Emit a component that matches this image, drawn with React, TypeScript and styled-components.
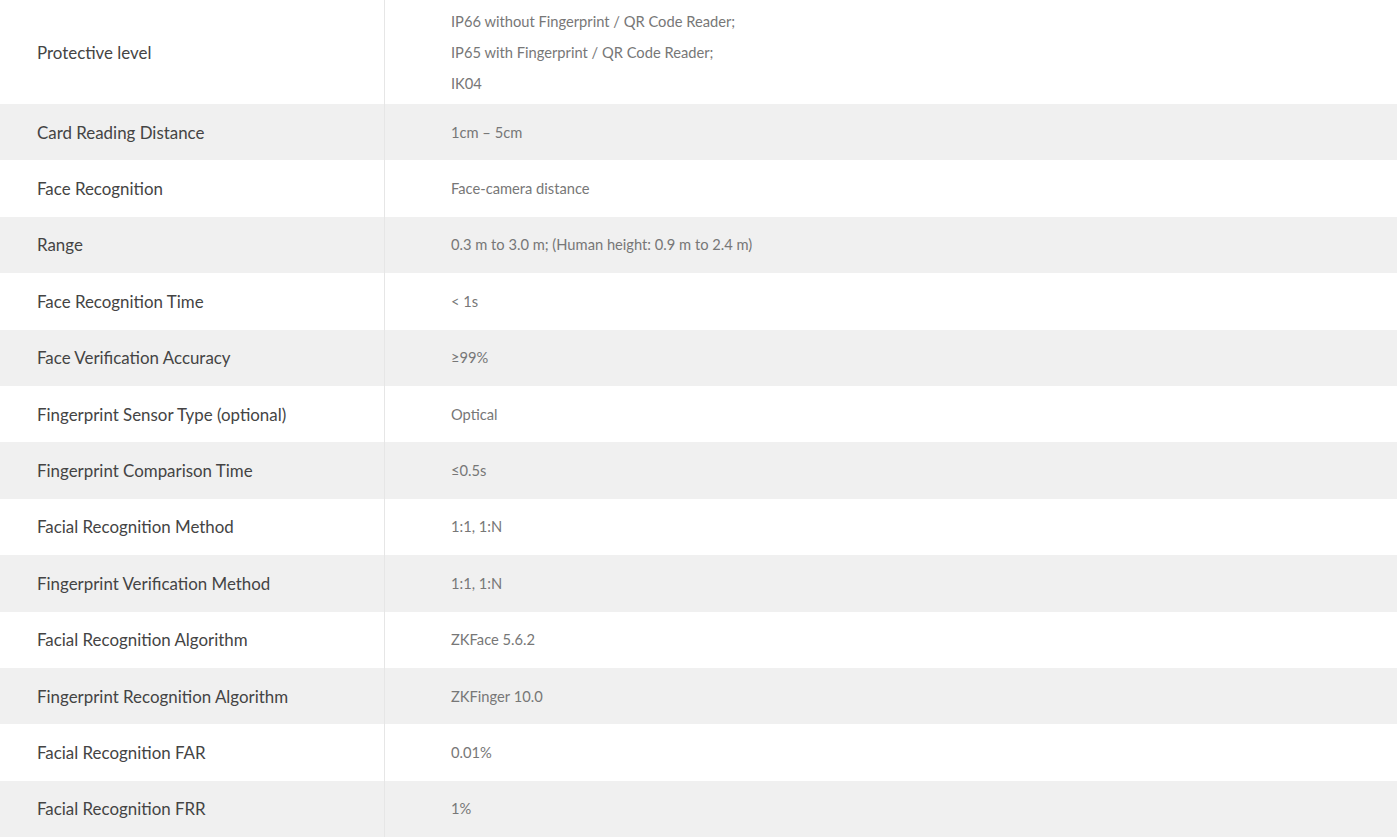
import React from "react";
import styled, { createGlobalStyle } from "styled-components";

const Global = createGlobalStyle`
  html, body { margin: 0; padding: 0; background: #fff; }
  body { font-family: Lato, "Open Sans", sans-serif; }
`;

const Table = styled.div`
  width: 1397px;
  display: flex;
  flex-direction: column;
`;

const Row = styled.div<{ $shaded: boolean; $tall?: boolean }>`
  display: grid;
  grid-template-columns: 385px 1fr;
  height: ${(p) => (p.$tall ? "104px" : "56.4px")};
  background: ${(p) => (p.$shaded ? "#f0f0f0" : "#ffffff")};
`;

const Label = styled.div`
  display: flex;
  align-items: center;
  padding-left: 37px;
  border-right: 1px solid #e6e6e6;
  font-size: 16.9px;
  color: #444;
`;

const Value = styled.div`
  display: flex;
  flex-direction: column;
  justify-content: center;
  padding-left: 66px;
  font-size: 14.7px;
  color: #777;
  line-height: 31px;
`;

const rows: { label: string; value: string[] }[] = [
  {
    label: "Protective level",
    value: [
      "IP66 without Fingerprint / QR Code Reader;",
      "IP65 with Fingerprint / QR Code Reader;",
      "IK04",
    ],
  },
  { label: "Card Reading Distance", value: ["1cm – 5cm"] },
  { label: "Face Recognition", value: ["Face-camera distance"] },
  { label: "Range", value: ["0.3 m to 3.0 m; (Human height: 0.9 m to 2.4 m)"] },
  { label: "Face Recognition Time", value: ["< 1s"] },
  { label: "Face Verification Accuracy", value: ["≥99%"] },
  { label: "Fingerprint Sensor Type (optional)", value: ["Optical"] },
  { label: "Fingerprint Comparison Time", value: ["≤0.5s"] },
  { label: "Facial Recognition Method", value: ["1:1, 1:N"] },
  { label: "Fingerprint Verification Method", value: ["1:1, 1:N"] },
  { label: "Facial Recognition Algorithm", value: ["ZKFace 5.6.2"] },
  { label: "Fingerprint Recognition Algorithm", value: ["ZKFinger 10.0"] },
  { label: "Facial Recognition FAR", value: ["0.01%"] },
  { label: "Facial Recognition FRR", value: ["1%"] },
];

export default function App() {
  return (
    <>
      <Global />
      <Table>
        {rows.map((r, i) => (
          <Row key={r.label} $shaded={i % 2 === 1} $tall={r.value.length > 1}>
            <Label>{r.label}</Label>
            <Value>
              {r.value.map((v) => (
                <span key={v}>{v}</span>
              ))}
            </Value>
          </Row>
        ))}
      </Table>
    </>
  );
}
